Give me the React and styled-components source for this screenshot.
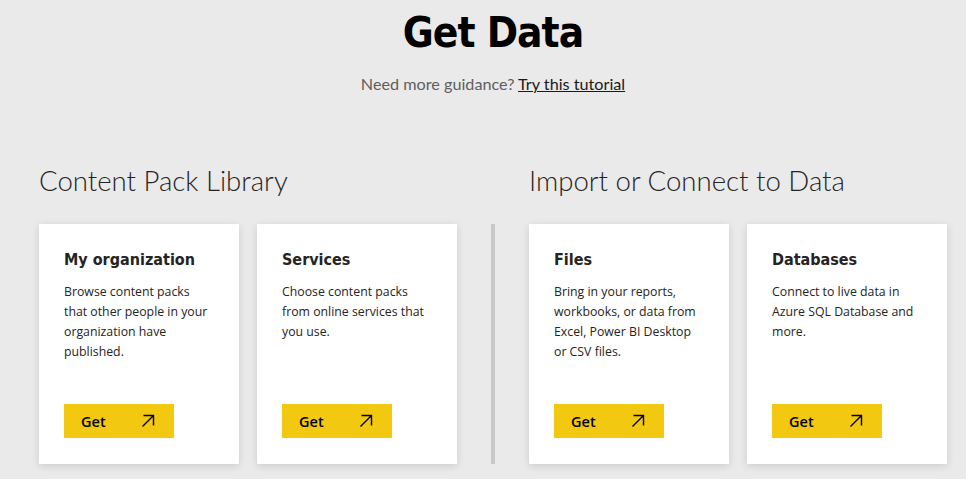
import React from "react";
import styled, { createGlobalStyle } from "styled-components";

const Global = createGlobalStyle`
  html, body { margin: 0; padding: 0; background: #eaeaea; }
  body { font-family: "Open Sans", "Liberation Sans", sans-serif; color: #252423; }
`;

const Page = styled.div`
  width: 966px;
  height: 479px;
  box-sizing: border-box;
  padding: 0 19px 0 39px;
  overflow: hidden;
  background: #eaeaea;
`;

const Header = styled.header`
  display: flex;
  flex-direction: column;
  align-items: center;
  padding-top: 9px;
`;

const Title = styled.h1`
  margin: 0;
  font-family: "DejaVu Sans Condensed", "DejaVu Sans", sans-serif;
  font-stretch: condensed;
  font-weight: 700;
  font-size: 42px;
  letter-spacing: -1px;
  line-height: 48px;
  color: #000;
`;

const Guidance = styled.p`
  margin: 17px 0 0;
  font-family: "Lato", sans-serif;
  font-size: 16.2px;
  line-height: 20px;
  color: #605e5c;
`;

const Link = styled.a`
  color: #1a1a1a;
  font-weight: 400;
  text-decoration: underline;
  cursor: pointer;
`;

const Main = styled.main`
  display: grid;
  grid-template-columns: 418px 4px 418px;
  column-gap: 34px;
  margin-top: 70px;
`;

const SectionTitle = styled.h2`
  grid-row: 1;
  grid-column: ${(p) => p.$col};
  margin: 0 0 26px;
  font-family: "Lato", sans-serif;
  font-weight: 300;
  font-size: 27.6px;
  line-height: 34px;
  color: #252423;
`;

const CardRow = styled.div`
  grid-row: 2;
  grid-column: ${(p) => p.$col};
  display: flex;
  gap: 18px;
`;

const Divider = styled.div`
  grid-row: 2;
  grid-column: 2;
  width: 4px;
  background: #c8c8c8;
`;

const Card = styled.div`
  width: 200px;
  height: 240px;
  box-sizing: border-box;
  background: #fff;
  box-shadow: 0 2px 8px rgba(0, 0, 0, 0.13);
  padding: 24px 25px 26px;
  display: flex;
  flex-direction: column;
`;

const CardTitle = styled.h3`
  margin: 0;
  font-family: "DejaVu Sans Condensed", "DejaVu Sans", sans-serif;
  font-stretch: condensed;
  font-weight: 700;
  font-size: 16px;
  line-height: 24px;
  color: #252423;
`;

const CardText = styled.p`
  margin: 10px 0 0;
  font-family: "Open Sans", sans-serif;
  font-size: 12.3px;
  line-height: 20px;
  color: #252423;
`;

const GetButton = styled.button`
  margin-top: auto;
  width: 110px;
  height: 34px;
  border: none;
  background: #f2c811;
  display: flex;
  align-items: center;
  justify-content: space-between;
  padding: 0 19px 0 17px;
  box-sizing: border-box;
  font-family: "Open Sans", sans-serif;
  font-weight: 600;
  font-size: 14.5px;
  color: #000;
  cursor: pointer;
`;

const Arrow = () => (
  <svg width="14" height="14" viewBox="0 0 14 14" fill="none" stroke="#000" strokeWidth="1.4">
    <path d="M1.5 12.5 L12.5 1.5 M2.5 1.5 H12.5 V11.5" />
  </svg>
);

const cards = {
  left: [
    { title: "My organization", text: "Browse content packs that other people in your organization have published." },
    { title: "Services", text: "Choose content packs from online services that you use." },
  ],
  right: [
    { title: "Files", text: "Bring in your reports, workbooks, or data from Excel, Power BI Desktop or CSV files." },
    { title: "Databases", text: "Connect to live data in Azure SQL Database and more." },
  ],
};

const DataCard = ({ title, text }) => (
  <Card>
    <CardTitle>{title}</CardTitle>
    <CardText>{text}</CardText>
    <GetButton>
      <span>Get</span>
      <Arrow />
    </GetButton>
  </Card>
);

export default function App() {
  return (
    <Page>
      <Global />
      <Header>
        <Title>Get Data</Title>
        <Guidance>
          Need more guidance? <Link>Try this tutorial</Link>
        </Guidance>
      </Header>
      <Main>
        <SectionTitle $col={1}>Content Pack Library</SectionTitle>
        <SectionTitle $col={3}>Import or Connect to Data</SectionTitle>
        <CardRow $col={1}>
          {cards.left.map((c) => (
            <DataCard key={c.title} {...c} />
          ))}
        </CardRow>
        <Divider />
        <CardRow $col={3}>
          {cards.right.map((c) => (
            <DataCard key={c.title} {...c} />
          ))}
        </CardRow>
      </Main>
    </Page>
  );
}
